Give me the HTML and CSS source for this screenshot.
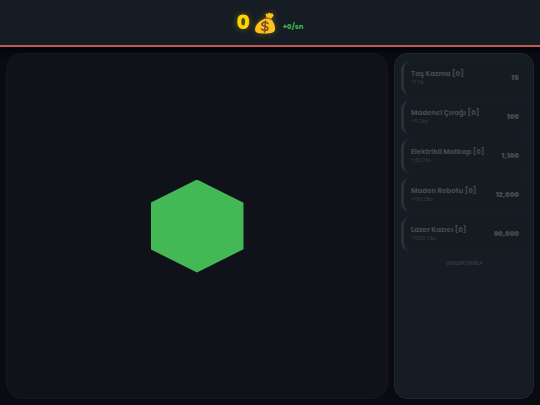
FILE: index.html
```html
<!DOCTYPE html>
<html lang="tr">
<head>
  <meta charset="UTF-8">
  <meta name="viewport" content="width=device-width, initial-scale=1.0">
  <title>Maden</title>
  <link rel="stylesheet" href="styles.css">
</head>
<body>
  <header class="topbar">
    <div class="balance">
      <span id="money">0</span>
      <svg class="bag" viewBox="0 0 44 44" aria-hidden="true">
        <path d="M25 11 L23 4 Q24 2 27 4 Q30 0 33 3 Q38 1 38 5 Q41 7 37 10 L33 15 Z" fill="#fcc21b"/>
        <path d="M24 13 C14 15 2 25 2 35 C2 42 8 43 22 43 C36 43 42 41 42 34 C42 25 38 17 33 14 Z" fill="#fcc21b"/>
        <path d="M24 12 Q29 11 34 15" fill="none" stroke="#a66a2c" stroke-width="2.5" stroke-linecap="round"/>
        <path d="M28 23 C25 19 16 20 16 25 C16 30 28 27 28 33 C28 38 18 38 15 34 M23 18 L21 40" fill="none" stroke="#7b4b24" stroke-width="3" stroke-linecap="round"/>
      </svg>
    </div>
    <span class="rate">+0/sn</span>
  </header>

  <main class="game">
    <section class="mine">
      <button class="ore" aria-label="Kaz"></button>
    </section>

    <aside class="shop">
      <button class="item" disabled>
        <span class="info"><span class="name">Taş Kazma [0]</span><span class="gain">+1 Tık</span></span>
        <span class="price">15</span>
      </button>
      <button class="item" disabled>
        <span class="info"><span class="name">Madenci Çırağı [0]</span><span class="gain">+5 Oto</span></span>
        <span class="price">100</span>
      </button>
      <button class="item" disabled>
        <span class="info"><span class="name">Elektrikli Matkap [0]</span><span class="gain">+30 Oto</span></span>
        <span class="price">1,100</span>
      </button>
      <button class="item" disabled>
        <span class="info"><span class="name">Maden Robotu [0]</span><span class="gain">+150 Oto</span></span>
        <span class="price">12,000</span>
      </button>
      <button class="item" disabled>
        <span class="info"><span class="name">Lazer Kazıcı [0]</span><span class="gain">+1000 Oto</span></span>
        <span class="price">90,000</span>
      </button>
      <button class="reset">VERİLERİ SIFIRLA</button>
    </aside>
  </main>
</body>
</html>
```

FILE: styles.css
```css
* {
  box-sizing: border-box;
}

body {
  margin: 0;
  height: 100vh;
  display: flex;
  flex-direction: column;
  background: #090b11;
  color: #fff;
  font-family: Poppins, Inter, sans-serif;
  overflow: hidden;
}

button {
  font-family: inherit;
  border: none;
  background: none;
  color: inherit;
  padding: 0;
}

.topbar {
  display: flex;
  align-items: center;
  justify-content: center;
  gap: 7px;
  padding: 8px;
  background: #161c23;
  border-bottom: 2px solid #c05858;
  box-shadow: 0 2px 6px #000;
}

.balance {
  display: flex;
  align-items: center;
  gap: 4px;
  color: #ffd700;
  font-size: 20px;
  font-weight: 800;
  line-height: 29px;
  text-shadow: 0 0 6px rgba(255, 215, 0, 0.4);
}

.bag {
  width: 22px;
  height: 22px;
  filter: drop-shadow(0 0 3px rgba(255, 215, 0, 0.3));
}

.rate {
  color: #3fb950;
  font-size: 7px;
  font-weight: 700;
  line-height: 10px;
  padding-top: 8px;
}

.game {
  flex: 1;
  min-height: 0;
  display: grid;
  grid-template-columns: 1fr 140px;
  gap: 6px;
  padding: 6px;
}

.mine {
  display: flex;
  align-items: center;
  justify-content: center;
  background: #0f1218;
  border: 1px solid #15191e;
  border-radius: 16px;
}

.ore {
  width: 93px;
  height: 93px;
  background: #43b854;
  clip-path: polygon(50% 0, 100% 25%, 100% 75%, 50% 100%, 0 75%, 0 25%);
  cursor: pointer;
}

.shop {
  display: flex;
  flex-direction: column;
  gap: 5px;
  padding: 7px 6px;
  background: #161c23;
  border: 1px solid #20262d;
  border-radius: 13px;
  overflow-y: auto;
}

.item {
  display: flex;
  align-items: center;
  justify-content: space-between;
  height: 34px;
  padding: 0 8px 0 7px;
  border-left: 3px solid #2b2f36;
  border-radius: 9px;
  background: #161b22;
  color: #464a50;
  text-align: left;
}

.info {
  display: flex;
  flex-direction: column;
}

.name {
  font-size: 7px;
  font-weight: 700;
  line-height: 10px;
}

.gain {
  color: #383d43;
  font-size: 5px;
  line-height: 8px;
}

.price {
  font-size: 7px;
  font-weight: 900;
}

.reset {
  margin-top: 5px;
  color: #464446;
  font-size: 5px;
  line-height: 6px;
  cursor: pointer;
}
```
